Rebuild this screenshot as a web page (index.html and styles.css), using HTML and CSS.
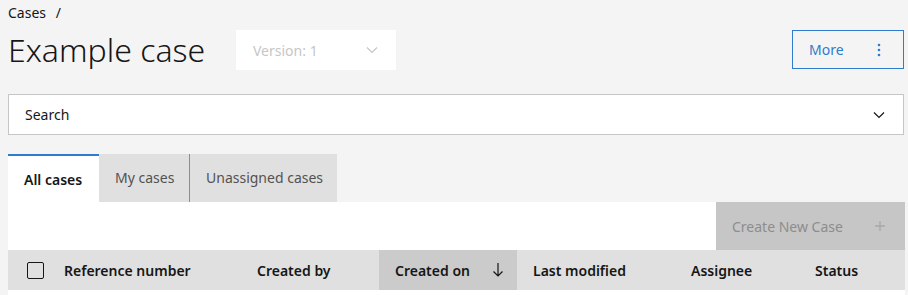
FILE: index.html
```html
<!DOCTYPE html>
<html lang="en">
<head>
    <meta charset="UTF-8">
    <title>Example case</title>
    <link rel="stylesheet" href="styles.css">
</head>
<body>

    <div class="page">
        <div class="breadcrumb">Cases <span class="sep">/</span></div>

        <div class="header">
            <h1 class="title">Example case</h1>
            <div class="version">
                <span>Version: 1</span>
                <svg width="12" height="8" viewBox="0 0 12 8"><path d="M1 1.5 L6 6.5 L11 1.5" fill="none" stroke="currentColor" stroke-width="1.2"/></svg>
            </div>
            <button class="moreButton">
                <span>More</span>
                <svg width="4" height="14" viewBox="0 0 4 14"><circle cx="2" cy="2" r="1.3" fill="currentColor"/><circle cx="2" cy="7" r="1.3" fill="currentColor"/><circle cx="2" cy="12" r="1.3" fill="currentColor"/></svg>
            </button>
        </div>

        <div class="search">
            <span>Search</span>
            <svg width="12" height="8" viewBox="0 0 12 8"><path d="M1 1.5 L6 6.5 L11 1.5" fill="none" stroke="currentColor" stroke-width="1.2"/></svg>
        </div>

        <div class="tabs">
            <div class="tab active">All cases</div>
            <div class="tab mine">My cases</div>
            <div class="tab divided">Unassigned cases</div>
        </div>

        <div class="toolbar">
            <button class="createButton">
                <span>Create New Case</span>
                <svg width="12" height="12" viewBox="0 0 12 12"><path d="M6 1 V11 M1 6 H11" stroke="currentColor" stroke-width="1.3"/></svg>
            </button>
        </div>

        <div class="tableHead">
            <div class="cell checkCell"><span class="checkbox"></span></div>
            <div class="cell">Reference number</div>
            <div class="cell">Created by</div>
            <div class="cell sorted">
                <span>Created on</span>
                <svg width="12" height="16" viewBox="0 0 12 16"><path d="M6 1 V14 M1.5 9.5 L6 14 L10.5 9.5" fill="none" stroke="currentColor" stroke-width="1.2"/></svg>
            </div>
            <div class="cell">Last modified</div>
            <div class="cell">Assignee</div>
            <div class="cell">Status</div>
        </div>
        <div class="tableBody"></div>
    </div>

</body>
</html>
```

FILE: styles.css
```css
body {
    font-family: 'Noto Sans', 'Open Sans', sans-serif;
    margin: 0;
    padding: 0;
    background-color: #f4f4f4;
    color: #161616;
}

.page {
    width: 897px;
    margin-left: 8px;
}

.breadcrumb {
    font-size: 14px;
    line-height: 18px;
    padding-top: 4px;
}

.breadcrumb .sep {
    margin-left: 6px;
}

.header {
    display: flex;
    align-items: flex-start;
    margin-top: 8px;
}

.title {
    font-size: 32px;
    font-weight: 300;
    line-height: 40px;
    margin: 0;
    width: 228px;
    white-space: nowrap;
}

.version {
    width: 160px;
    height: 40px;
    background-color: #fff;
    color: #c6c6c6;
    font-size: 14px;
    display: flex;
    align-items: center;
    justify-content: space-between;
    padding: 0 18px 0 17px;
    box-sizing: border-box;
}

.moreButton {
    margin-left: auto;
    margin-right: 1px;
    width: 112px;
    height: 39px;
    border: 1px solid #2e7bcf;
    background: none;
    color: #2e7bcf;
    font-family: inherit;
    font-size: 14px;
    display: flex;
    align-items: center;
    justify-content: space-between;
    padding: 0 22px 0 16px;
    box-sizing: border-box;
}

.search {
    margin-top: 24px;
    height: 41px;
    width: 896px;
    background-color: #fff;
    border: 1px solid #c6c6c6;
    box-sizing: border-box;
    display: flex;
    align-items: center;
    justify-content: space-between;
    padding: 0 18px 0 16px;
    font-size: 14px;
}

.tabs {
    display: flex;
    margin-top: 19px;
}

.tab {
    height: 48px;
    padding: 0 0 2px 16px;
    display: flex;
    align-items: center;
    background-color: #e0e0e0;
    color: #525252;
    font-size: 14px;
    box-sizing: border-box;
    white-space: nowrap;
}

.tab.active {
    background-color: #fff;
    border-top: 2px solid #2e7bcf;
    padding-bottom: 0;
    color: #161616;
    font-weight: 600;
    width: 91px;
}

.tab.mine {
    width: 90px;
}

.tab.divided {
    width: 148px;
    border-left: 1px solid #8d8d8d;
}

.toolbar {
    background-color: #fff;
    height: 48px;
    display: flex;
    justify-content: flex-end;
}

.createButton {
    width: 189px;
    height: 48px;
    border: none;
    background-color: #c6c6c6;
    color: #8d8d8d;
    font-family: inherit;
    font-size: 14px;
    display: flex;
    align-items: center;
    justify-content: space-between;
    padding: 0 19px 0 16px;
}

.createButton svg {
    color: #a8a8a8;
}

.tableHead {
    display: grid;
    grid-template-columns: 40px 193px 138px 138px 158px 124px 106px;
    height: 40px;
    background-color: #e0e0e0;
    font-size: 14px;
    font-weight: 600;
}

.cell {
    display: flex;
    align-items: center;
    padding-left: 16px;
    white-space: nowrap;
}

.checkCell {
    padding-left: 19px;
}

.checkbox {
    width: 15px;
    height: 15px;
    border: 1px solid #161616;
    border-radius: 2px;
}

.sorted {
    background-color: #cbcbcb;
    justify-content: space-between;
    padding-right: 13px;
}

.tableBody {
    background-color: #fff;
    height: 5px;
}
```
